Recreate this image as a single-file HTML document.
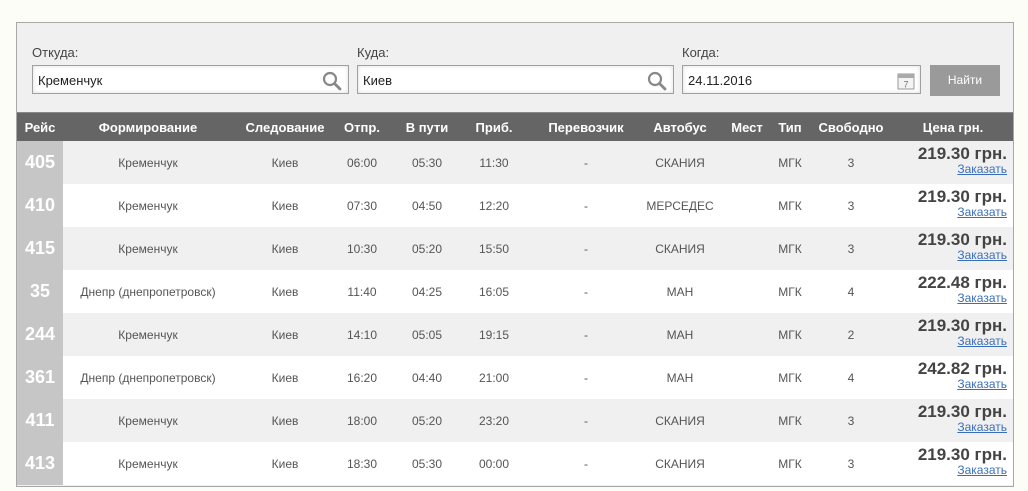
<!DOCTYPE html>
<html><head><meta charset="utf-8"><style>
body{margin:0;width:1028px;height:491px;background:#fdfdf7;font-family:"Liberation Sans",Arial,sans-serif;position:relative;overflow:hidden}
.frame{position:absolute;left:16px;top:22px;width:996px;height:463px;border:1px solid #a8a8a8;background:#f0f0f0}
.lbl{position:absolute;top:45px;font-size:13px;color:#444}
.inp{position:absolute;top:65px;height:29px;border:1px solid #a0a0a0;background:#fff;box-shadow:inset 0 0 4px #ddd;font-size:13px;color:#222;line-height:29px;padding-left:5px;box-sizing:border-box}
.btn{position:absolute;left:930px;top:65px;width:70px;height:31px;background:#9a9a9a;color:#fff;font-size:12px;text-align:center;line-height:31px}
.hd{position:absolute;left:17px;top:112px;width:996px;height:29px;background:#656565;border-top:1px solid #888;box-sizing:border-box}
.c{position:absolute;transform:translateX(-50%);white-space:nowrap}
.hd .c{top:7px;color:#fff;font-weight:bold;font-size:13px}
.row{position:absolute;left:17px;width:996px;height:43px}
.row .c{top:15px;font-size:12px;color:#555}
.num{position:absolute;left:0;top:0;width:46px;height:43px;background:#c6c6c6;color:#fff;font-weight:bold;font-size:18px;text-align:center;line-height:43px}
.pr{position:absolute;right:6px;top:4px;text-align:right}
.pr b{display:block;font-size:17px;color:#444;line-height:18px}
.pr a{display:block;font-size:12px;color:#3a6fb8;text-decoration:underline;line-height:13px}
</style></head><body>
<div class="frame"></div>
<div class="lbl" style="left:32px">Откуда:</div>
<div class="lbl" style="left:357px">Куда:</div>
<div class="lbl" style="left:682px">Когда:</div>
<div class="inp" style="left:32px;width:317px">Кременчук<svg style="position:absolute;right:6px;top:5px" width="20" height="20" viewBox="0 0 20 20"><circle cx="8" cy="8" r="6" fill="none" stroke="#888" stroke-width="2.2"/><path d="M12.5 12.5L18 18" stroke="#888" stroke-width="2.8" stroke-linecap="round"/></svg></div>
<div class="inp" style="left:357px;width:317px">Киев<svg style="position:absolute;right:6px;top:5px" width="20" height="20" viewBox="0 0 20 20"><circle cx="8" cy="8" r="6" fill="none" stroke="#888" stroke-width="2.2"/><path d="M12.5 12.5L18 18" stroke="#888" stroke-width="2.8" stroke-linecap="round"/></svg></div>
<div class="inp" style="left:682px;width:239px">24.11.2016<svg style="position:absolute;right:5px;top:5px" width="18" height="19" viewBox="0 0 18 19"><rect x="1" y="3" width="16" height="15" fill="#f4f4f4" stroke="#999"/><rect x="1" y="3" width="16" height="4" fill="#aaa"/><text x="9" y="16.5" font-size="9" text-anchor="middle" fill="#777" font-family="Liberation Sans">7</text></svg></div>
<div class="btn">Найти</div>
<div class="hd">
<span class="c" style="left:23px">Рейс</span><span class="c" style="left:131px">Формирование</span><span class="c" style="left:268px">Следование</span><span class="c" style="left:345px">Отпр.</span><span class="c" style="left:410px">В пути</span><span class="c" style="left:477px">Приб.</span><span class="c" style="left:569px">Перевозчик</span><span class="c" style="left:663px">Автобус</span><span class="c" style="left:730px">Мест</span><span class="c" style="left:773px">Тип</span><span class="c" style="left:834px">Свободно</span><span class="c" style="left:936px">Цена грн.</span>
</div>
<div class="row" style="top:141px;background:#f0f0f0"><div class="num">405</div><span class="c" style="left:131px">Кременчук</span><span class="c" style="left:268px">Киев</span><span class="c" style="left:345px">06:00</span><span class="c" style="left:410px">05:30</span><span class="c" style="left:477px">11:30</span><span class="c" style="left:569px">-</span><span class="c" style="left:663px">СКАНИЯ</span><span class="c" style="left:773px">МГК</span><span class="c" style="left:834px">3</span><div class="pr"><b>219.30 грн.</b><a>Заказать</a></div></div>
<div class="row" style="top:184px;background:#fff"><div class="num">410</div><span class="c" style="left:131px">Кременчук</span><span class="c" style="left:268px">Киев</span><span class="c" style="left:345px">07:30</span><span class="c" style="left:410px">04:50</span><span class="c" style="left:477px">12:20</span><span class="c" style="left:569px">-</span><span class="c" style="left:663px">МЕРСЕДЕС</span><span class="c" style="left:773px">МГК</span><span class="c" style="left:834px">3</span><div class="pr"><b>219.30 грн.</b><a>Заказать</a></div></div>
<div class="row" style="top:227px;background:#f0f0f0"><div class="num">415</div><span class="c" style="left:131px">Кременчук</span><span class="c" style="left:268px">Киев</span><span class="c" style="left:345px">10:30</span><span class="c" style="left:410px">05:20</span><span class="c" style="left:477px">15:50</span><span class="c" style="left:569px">-</span><span class="c" style="left:663px">СКАНИЯ</span><span class="c" style="left:773px">МГК</span><span class="c" style="left:834px">3</span><div class="pr"><b>219.30 грн.</b><a>Заказать</a></div></div>
<div class="row" style="top:270px;background:#fff"><div class="num">35</div><span class="c" style="left:131px">Днепр (днепропетровск)</span><span class="c" style="left:268px">Киев</span><span class="c" style="left:345px">11:40</span><span class="c" style="left:410px">04:25</span><span class="c" style="left:477px">16:05</span><span class="c" style="left:569px">-</span><span class="c" style="left:663px">МАН</span><span class="c" style="left:773px">МГК</span><span class="c" style="left:834px">4</span><div class="pr"><b>222.48 грн.</b><a>Заказать</a></div></div>
<div class="row" style="top:313px;background:#f0f0f0"><div class="num">244</div><span class="c" style="left:131px">Кременчук</span><span class="c" style="left:268px">Киев</span><span class="c" style="left:345px">14:10</span><span class="c" style="left:410px">05:05</span><span class="c" style="left:477px">19:15</span><span class="c" style="left:569px">-</span><span class="c" style="left:663px">МАН</span><span class="c" style="left:773px">МГК</span><span class="c" style="left:834px">2</span><div class="pr"><b>219.30 грн.</b><a>Заказать</a></div></div>
<div class="row" style="top:356px;background:#fff"><div class="num">361</div><span class="c" style="left:131px">Днепр (днепропетровск)</span><span class="c" style="left:268px">Киев</span><span class="c" style="left:345px">16:20</span><span class="c" style="left:410px">04:40</span><span class="c" style="left:477px">21:00</span><span class="c" style="left:569px">-</span><span class="c" style="left:663px">МАН</span><span class="c" style="left:773px">МГК</span><span class="c" style="left:834px">4</span><div class="pr"><b>242.82 грн.</b><a>Заказать</a></div></div>
<div class="row" style="top:399px;background:#f0f0f0"><div class="num">411</div><span class="c" style="left:131px">Кременчук</span><span class="c" style="left:268px">Киев</span><span class="c" style="left:345px">18:00</span><span class="c" style="left:410px">05:20</span><span class="c" style="left:477px">23:20</span><span class="c" style="left:569px">-</span><span class="c" style="left:663px">СКАНИЯ</span><span class="c" style="left:773px">МГК</span><span class="c" style="left:834px">3</span><div class="pr"><b>219.30 грн.</b><a>Заказать</a></div></div>
<div class="row" style="top:442px;background:#fff"><div class="num">413</div><span class="c" style="left:131px">Кременчук</span><span class="c" style="left:268px">Киев</span><span class="c" style="left:345px">18:30</span><span class="c" style="left:410px">05:30</span><span class="c" style="left:477px">00:00</span><span class="c" style="left:569px">-</span><span class="c" style="left:663px">СКАНИЯ</span><span class="c" style="left:773px">МГК</span><span class="c" style="left:834px">3</span><div class="pr"><b>219.30 грн.</b><a>Заказать</a></div></div>
</body></html>
